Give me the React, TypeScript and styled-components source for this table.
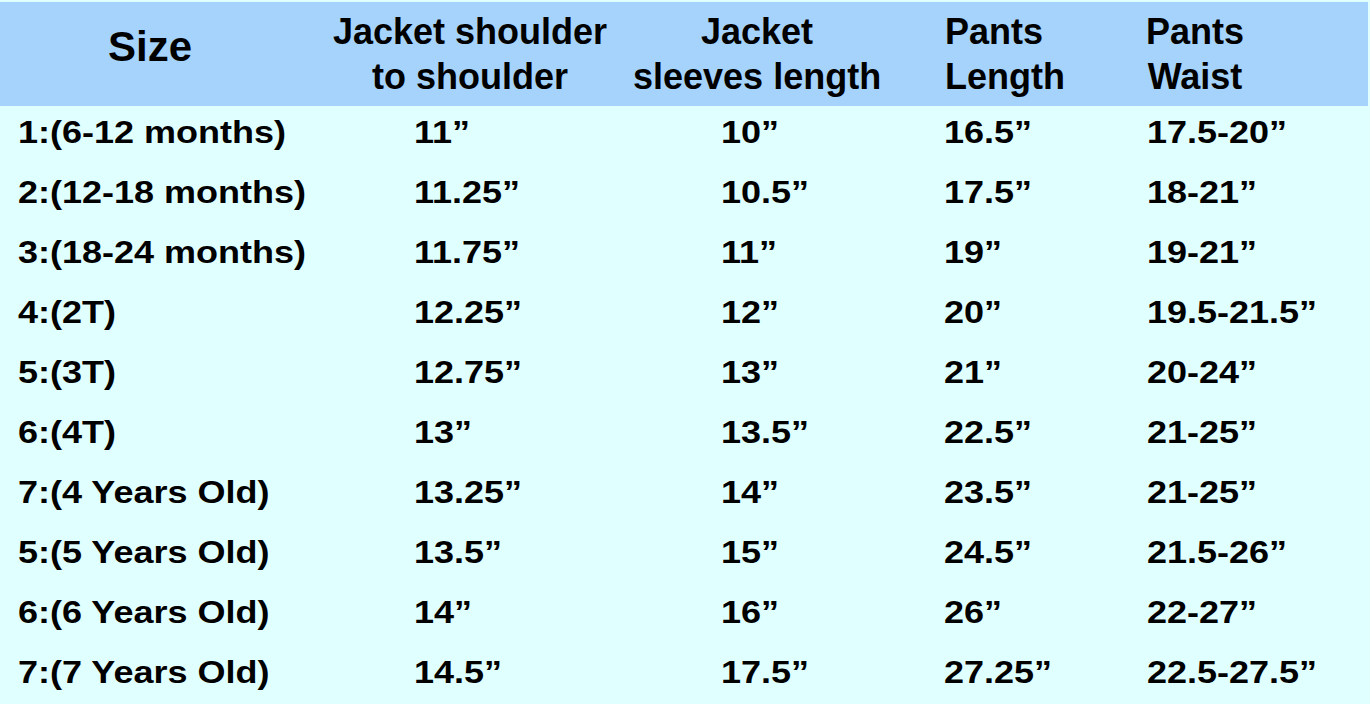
import React from 'react'
import styled, { createGlobalStyle } from 'styled-components'

const GlobalStyle = createGlobalStyle`
  html, body {
    margin: 0;
    padding: 0;
    background: #e0ffff;
  }
`

const COLUMNS = '300px 320px 310px 200px 1fr'

type Column = {
  title: React.ReactNode
  headIndent: number
  bodyIndent: number
  big?: boolean
  alignLeft?: boolean
}

const columns: Column[] = [
  { title: 'Size', headIndent: 108, bodyIndent: 18, big: true },
  {
    title: (
      <>
        Jacket shoulder
        <br />
        to shoulder
      </>
    ),
    headIndent: 33,
    bodyIndent: 114,
  },
  {
    title: (
      <>
        Jacket
        <br />
        sleeves length
      </>
    ),
    headIndent: 13,
    bodyIndent: 101,
  },
  {
    title: (
      <>
        Pants
        <br />
        Length
      </>
    ),
    headIndent: 15,
    bodyIndent: 14,
    alignLeft: true,
  },
  {
    title: (
      <>
        Pants
        <br />
        Waist
      </>
    ),
    headIndent: 16,
    bodyIndent: 17,
  },
]

const rows: string[][] = [
  ['1:(6-12 months)', '11”', '10”', '16.5”', '17.5-20”'],
  ['2:(12-18 months)', '11.25”', '10.5”', '17.5”', '18-21”'],
  ['3:(18-24 months)', '11.75”', '11”', '19”', '19-21”'],
  ['4:(2T)', '12.25”', '12”', '20”', '19.5-21.5”'],
  ['5:(3T)', '12.75”', '13”', '21”', '20-24”'],
  ['6:(4T)', '13”', '13.5”', '22.5”', '21-25”'],
  ['7:(4 Years Old)', '13.25”', '14”', '23.5”', '21-25”'],
  ['5:(5 Years Old)', '13.5”', '15”', '24.5”', '21.5-26”'],
  ['6:(6 Years Old)', '14”', '16”', '26”', '22-27”'],
  ['7:(7 Years Old)', '14.5”', '17.5”', '27.25”', '22.5-27.5”'],
]

const Page = styled.div`
  width: 1370px;
  height: 704px;
  overflow: hidden;
  background: #e0ffff;
  font-family: 'Liberation Sans', Arial, sans-serif;
  font-weight: bold;
  color: #000;
`

const HeaderRow = styled.div`
  display: grid;
  grid-template-columns: ${COLUMNS};
  height: 104px;
  margin: 2px 2px 0 0;
  background: #a5d3fb;
`

const HeadCell = styled.div<{ $indent: number }>`
  display: flex;
  align-items: center;
  padding-left: ${({ $indent }) => $indent}px;
`

const HeadText = styled.div<{ $big?: boolean; $left?: boolean }>`
  text-align: ${({ $left }) => ($left ? 'left' : 'center')};
  white-space: nowrap;
  font-size: ${({ $big }) => ($big ? 42 : 36)}px;
  line-height: ${({ $big }) => ($big ? 42 : 45)}px;
  padding-bottom: ${({ $big }) => ($big ? 15 : 0)}px;
`

const BodyRow = styled.div`
  display: grid;
  grid-template-columns: ${COLUMNS};
  height: 60px;
`

const Cell = styled.div<{ $indent: number }>`
  padding-left: ${({ $indent }) => $indent}px;
  font-size: 32px;
  line-height: 52px;
  white-space: nowrap;
`

const Value = styled.span`
  display: inline-block;
  transform: scaleX(1.125);
  transform-origin: left center;
`

const App: React.FC = () => {
  return (
    <Page>
      <GlobalStyle />
      <HeaderRow>
        {columns.map((col, i) => (
          <HeadCell key={i} $indent={col.headIndent}>
            <HeadText $big={col.big} $left={col.alignLeft}>
              {col.title}
            </HeadText>
          </HeadCell>
        ))}
      </HeaderRow>
      {rows.map((row, r) => (
        <BodyRow key={r}>
          {row.map((value, c) => (
            <Cell key={c} $indent={columns[c].bodyIndent}>
              <Value>{value}</Value>
            </Cell>
          ))}
        </BodyRow>
      ))}
    </Page>
  )
}

export default App
